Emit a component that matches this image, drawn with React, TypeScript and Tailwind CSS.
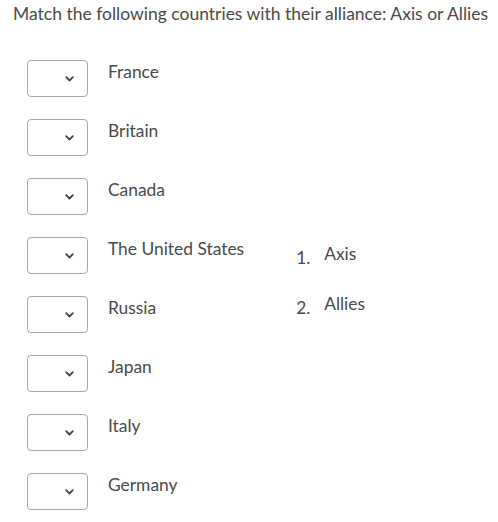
import React from "react";

const countries = ["France", "Britain", "Canada", "The United States", "Russia", "Japan", "Italy", "Germany"];

function Chevron() {
  return (
    <svg width="9" height="6" viewBox="0 0 9 6" className="block">
      <path d="M1.2 1.2 L4.5 4.5 L7.8 1.2" fill="none" stroke="#444" strokeWidth="1.8" strokeLinecap="round" strokeLinejoin="round" />
    </svg>
  );
}

export default function App() {
  return (
    <div className="w-[498px] h-[522px] bg-white text-[#4a4a4a] overflow-hidden" style={{ fontFamily: "Lato, 'Open Sans', sans-serif" }}>
      <div className="pl-[13px] pt-[3px] text-[17.5px] leading-[22px]">
        Match the following countries with their alliance: Axis or Allies
      </div>
      <div className="flex mt-[35px]">
        <div className="flex flex-col gap-[22px] pl-[27px]">
          {countries.map((c) => (
            <div key={c} className="flex items-start">
              <div className="w-[61px] h-[37px] rounded-[4px] border border-[#a8a8a8] flex items-center justify-end pr-[13px] bg-white">
                <Chevron />
              </div>
              <div className="ml-[20px] pt-[2px] text-[17.4px] leading-[20px]">{c}</div>
            </div>
          ))}
        </div>
        <div className="ml-[52px] pt-[184px] flex flex-col gap-[26px] text-[17.4px]">
          <div className="flex items-start">
            <span className="w-[28px] pt-[4px] leading-[20px]">1.</span>
            <span className="leading-[20px]">Axis</span>
          </div>
          <div className="flex items-start">
            <span className="w-[28px] pt-[4px] leading-[20px]">2.</span>
            <span className="leading-[20px]">Allies</span>
          </div>
        </div>
      </div>
    </div>
  );
}
